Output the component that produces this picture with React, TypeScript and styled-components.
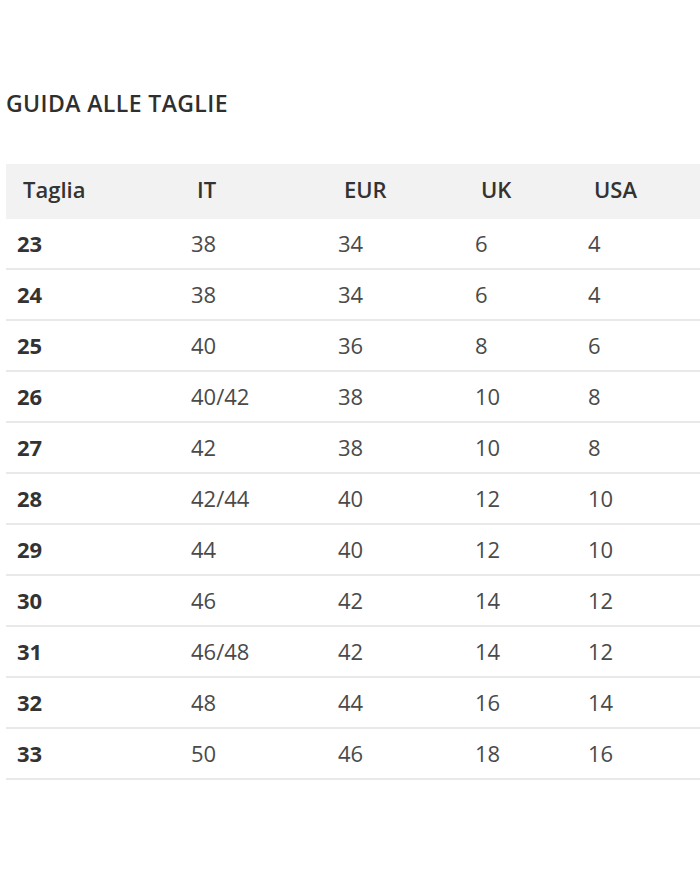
import React from "react";
import styled, { createGlobalStyle } from "styled-components";

const Global = createGlobalStyle`
  html, body { margin: 0; padding: 0; background: #fff; overflow-x: hidden; }
  body { font-family: "Open Sans", "Noto Sans", sans-serif; }
`;

const Page = styled.div`
  padding-top: 89px;
  padding-left: 6px;
`;

const Title = styled.h2`
  margin: 0 0 46px 0;
  font-size: 23px;
  line-height: 29px;
  font-weight: 600;
  color: #2f2f2f;
  letter-spacing: 0.4px;
`;

const Table = styled.div`
  display: grid;
  grid-template-columns: 174px 147px 137px 113px 1fr;
  width: 100%;
`;

const HeadCell = styled.div`
  background: #f2f2f2;
  height: 55px;
  line-height: 51px;
  padding-left: 17px;
  font-size: 22px;
  font-weight: 600;
  color: #333;
`;

const Cell = styled.div<{ $bold?: boolean }>`
  height: 49px;
  line-height: 49px;
  padding-left: 11px;
  border-bottom: 2px solid #e9e9e9;
  font-size: 22px;
  font-weight: ${(p) => (p.$bold ? 700 : 400)};
  color: ${(p) => (p.$bold ? "#333" : "#4a4a4a")};
`;

const headers = ["Taglia", "IT", "EUR", "UK", "USA"];
const rows = [
  ["23", "38", "34", "6", "4"],
  ["24", "38", "34", "6", "4"],
  ["25", "40", "36", "8", "6"],
  ["26", "40/42", "38", "10", "8"],
  ["27", "42", "38", "10", "8"],
  ["28", "42/44", "40", "12", "10"],
  ["29", "44", "40", "12", "10"],
  ["30", "46", "42", "14", "12"],
  ["31", "46/48", "42", "14", "12"],
  ["32", "48", "44", "16", "14"],
  ["33", "50", "46", "18", "16"],
];

export default function App() {
  return (
    <>
      <Global />
      <Page>
        <Title>GUIDA ALLE TAGLIE</Title>
        <Table>
          {headers.map((h) => (
            <HeadCell key={h}>{h}</HeadCell>
          ))}
          {rows.map((r, i) =>
            r.map((c, j) => (
              <Cell key={`${i}-${j}`} $bold={j === 0}>
                {c}
              </Cell>
            ))
          )}
        </Table>
      </Page>
    </>
  );
}
